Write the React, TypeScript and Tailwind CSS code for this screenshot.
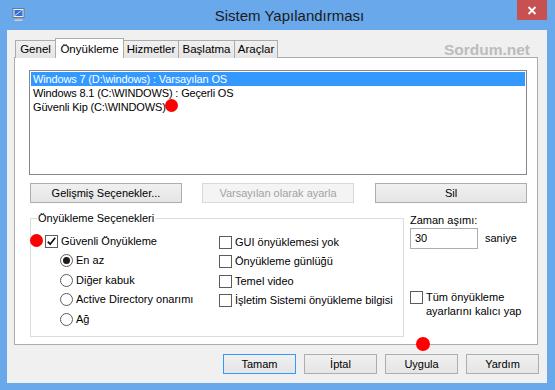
import React from "react";

const F = "font-['Liberation_Sans',Arial,sans-serif]";

function CheckBox({ checked = false }: { checked?: boolean }) {
  return (
    <span className="w-[13px] h-[13px] border border-[#5c5c5c] bg-white flex items-center justify-center shrink-0">
      {checked && (
        <svg width="11" height="11" viewBox="0 0 11 11">
          <path d="M1.8 5.6 L4.2 8.2 L9.2 1.8" fill="none" stroke="#111" strokeWidth="1.7" />
        </svg>
      )}
    </span>
  );
}

function Radio({ checked = false }: { checked?: boolean }) {
  return (
    <span className="w-[13px] h-[13px] rounded-full border border-[#5c5c5c] bg-white flex items-center justify-center shrink-0">
      {checked && <span className="w-[7px] h-[7px] rounded-full bg-[#1c1c1c]" />}
    </span>
  );
}

function Btn({ children, w, disabled = false, def = false }: { children: React.ReactNode; w: string; disabled?: boolean; def?: boolean }) {
  const base = "h-[20px] flex items-center justify-center border text-[11px]";
  if (disabled)
    return <div className={`${base} ${w} border-[#d9d9d9] bg-[#f4f4f4] text-[#a3a3a3]`}>{children}</div>;
  return (
    <div className={`${base} ${w} ${def ? "border-[#3399ff]" : "border-[#adadad]"} bg-gradient-to-b from-[#f0f0f0] to-[#e5e5e5] text-black`}>
      {children}
    </div>
  );
}

export default function App() {
  return (
    <div className={`relative w-[555px] h-[390px] bg-[#6aa8ec] flex flex-col ${F} text-[11px] text-black overflow-hidden`}>
      {/* Title bar */}
      <div className="h-[30px] flex items-start shrink-0">
        <div className="ml-[12px] mt-[8px] w-[14px] h-[14px]">
          <svg width="14" height="14" viewBox="0 0 14 14">
            <rect x="1" y="0.5" width="11" height="9" fill="#e8eef6" stroke="#6b7a90" />
            <rect x="2.5" y="2" width="8" height="6" fill="#2f6fd6" />
            <path d="M3 7.5 L9.5 2.5" stroke="#bfe0ff" strokeWidth="1" />
            <rect x="4" y="10" width="5" height="1.5" fill="#9aa3ad" />
            <rect x="2.5" y="11.5" width="8" height="1.5" fill="#c9cfd6" />
          </svg>
        </div>
        <div className="flex-1 text-center pt-[5px] pl-[36px] text-[15px] text-[#1a1a1a]">Sistem Yapılandırması</div>
        <div className="w-[30px] h-[20px] mr-[8px] bg-[#c75050] flex items-center justify-center">
          <svg width="10" height="9" viewBox="0 0 10 9">
            <path d="M1.5 1 L8.5 8 M8.5 1 L1.5 8" stroke="#fff" strokeWidth="1.8" />
          </svg>
        </div>
      </div>

      {/* Content */}
      <div className="ml-[7px] w-[540px] h-[353px] bg-[#f0f0f0] flex flex-col shrink-0">
        {/* Tab strip */}
        <div className="h-[27px] flex items-end pl-[8px] shrink-0">
          <div className="w-[41px] h-[18px] border border-b-0 border-[#acacac] bg-gradient-to-b from-[#f0f0f0] to-[#e5e5e5] flex items-center justify-center text-[11.5px] mb-[-1px] z-0">
            Genel
          </div>
          <div className="w-[69px] h-[20px] border border-b-0 border-[#acacac] bg-white flex items-start justify-center pt-[2px] text-[11.5px] mb-[-1px] ml-[-1px] z-10">
            Önyükleme
          </div>
          <div className="w-[56px] h-[18px] border border-b-0 border-[#acacac] bg-gradient-to-b from-[#f0f0f0] to-[#e5e5e5] flex items-center justify-center text-[11.5px] mb-[-1px] ml-[-1px] z-0">
            Hizmetler
          </div>
          <div className="w-[56px] h-[18px] border border-b-0 border-l-0 border-[#acacac] bg-gradient-to-b from-[#f0f0f0] to-[#e5e5e5] flex items-center justify-center text-[11.5px] mb-[-1px] z-0">
            Başlatma
          </div>
          <div className="w-[43px] h-[18px] border border-b-0 border-l-0 border-[#acacac] bg-gradient-to-b from-[#f0f0f0] to-[#e5e5e5] flex items-center justify-center text-[11.5px] mb-[-1px] z-0">
            Araçlar
          </div>
          <div className="ml-auto mr-[17px] self-start mt-[8px] text-[15.5px] font-bold text-[#bcbcbc]">Sordum.net</div>
        </div>

        {/* Panel */}
        <div className="ml-[7px] w-[524px] h-[288px] border border-[#acacac] bg-white flex flex-col pt-[12px] pl-[14px] shrink-0">
          {/* List */}
          <div className="w-[498px] h-[105px] border border-[#828790] bg-white p-[1px] shrink-0 tracking-[-0.15px]">
            <div className="h-[14px] leading-[14px] pl-[2px] bg-[#3399ff] text-white">Windows 7 (D:\windows) : Varsayılan OS</div>
            <div className="h-[14px] leading-[14px] pl-[2px]">Windows 8.1 (C:\WINDOWS) : Geçerli OS</div>
            <div className="h-[14px] leading-[14px] pl-[2px]">Güvenli Kip (C:\WINDOWS)</div>
          </div>

          {/* Buttons */}
          <div className="flex mt-[8px] ml-[1px] shrink-0">
            <Btn w="w-[152px]">Gelişmiş Seçenekler...</Btn>
            <div className="ml-[20px]">
              <Btn w="w-[152px]" disabled>Varsayılan olarak ayarla</Btn>
            </div>
            <div className="ml-[21px]">
              <Btn w="w-[152px]">Sil</Btn>
            </div>
          </div>

          {/* Lower */}
          <div className="flex mt-[10px] ml-[1px]">
            {/* Group box */}
            <div className="relative mt-[5px] w-[374px] h-[119px] border border-[#dcdcdc] flex pt-[12px]">
              <div className="absolute left-[6px] top-[-8px] px-[1px] bg-white leading-[14px]">Önyükleme Seçenekleri</div>
              <div className="w-[188px] flex flex-col pl-[14px]">
                <div className="h-[20px] flex items-center gap-[3px]"><CheckBox checked />Güvenli Önyükleme</div>
                <div className="h-[19px] flex items-center gap-[3px] pl-[15px]"><Radio checked />En az</div>
                <div className="h-[20px] flex items-center gap-[3px] pl-[15px]"><Radio />Diğer kabuk</div>
                <div className="h-[19px] flex items-center gap-[3px] pl-[15px]"><Radio />Active Directory onarımı</div>
                <div className="h-[20px] flex items-center gap-[3px] pl-[15px]"><Radio />Ağ</div>
              </div>
              <div className="flex flex-col pt-[1px]">
                <div className="h-[20px] flex items-center gap-[3px]"><CheckBox />GUI önyüklemesi yok</div>
                <div className="h-[19px] flex items-center gap-[3px]"><CheckBox />Önyükleme günlüğü</div>
                <div className="h-[20px] flex items-center gap-[3px]"><CheckBox />Temel video</div>
                <div className="h-[19px] flex items-center gap-[3px] whitespace-nowrap"><CheckBox />İşletim Sistemi önyükleme bilgisi</div>
              </div>
            </div>

            {/* Right column */}
            <div className="ml-[6px] flex flex-col">
              <div className="h-[14px] leading-[14px]">Zaman aşımı:</div>
              <div className="flex items-center mt-[1px]">
                <div className="w-[68px] h-[21px] border border-[#abadb3] bg-white flex items-center pl-[4px]">30</div>
                <div className="ml-[7px]">saniye</div>
              </div>
              <div className="flex items-start mt-[41px] gap-[3px]">
                <div className="mt-[1px]"><CheckBox /></div>
                <div className="leading-[14px]">Tüm önyükleme<br />ayarlarını kalıcı yap</div>
              </div>
            </div>
          </div>
        </div>

        {/* Bottom buttons */}
        <div className="flex justify-end gap-[8px] mt-[9px] pr-[8px]">
          <Btn w="w-[73px]" def>Tamam</Btn>
          <Btn w="w-[73px]">İptal</Btn>
          <Btn w="w-[73px]">Uygula</Btn>
          <Btn w="w-[73px]">Yardım</Btn>
        </div>
      </div>

      {/* Red marker dots */}
      <div className="absolute left-[165px] top-[99px] w-[13px] h-[13px] rounded-full bg-[#ff0000]" />
      <div className="absolute left-[30px] top-[234px] w-[13px] h-[13px] rounded-full bg-[#ff0000]" />
      <div className="absolute left-[416px] top-[337px] w-[14px] h-[14px] rounded-full bg-[#ff0000]" />
    </div>
  );
}
